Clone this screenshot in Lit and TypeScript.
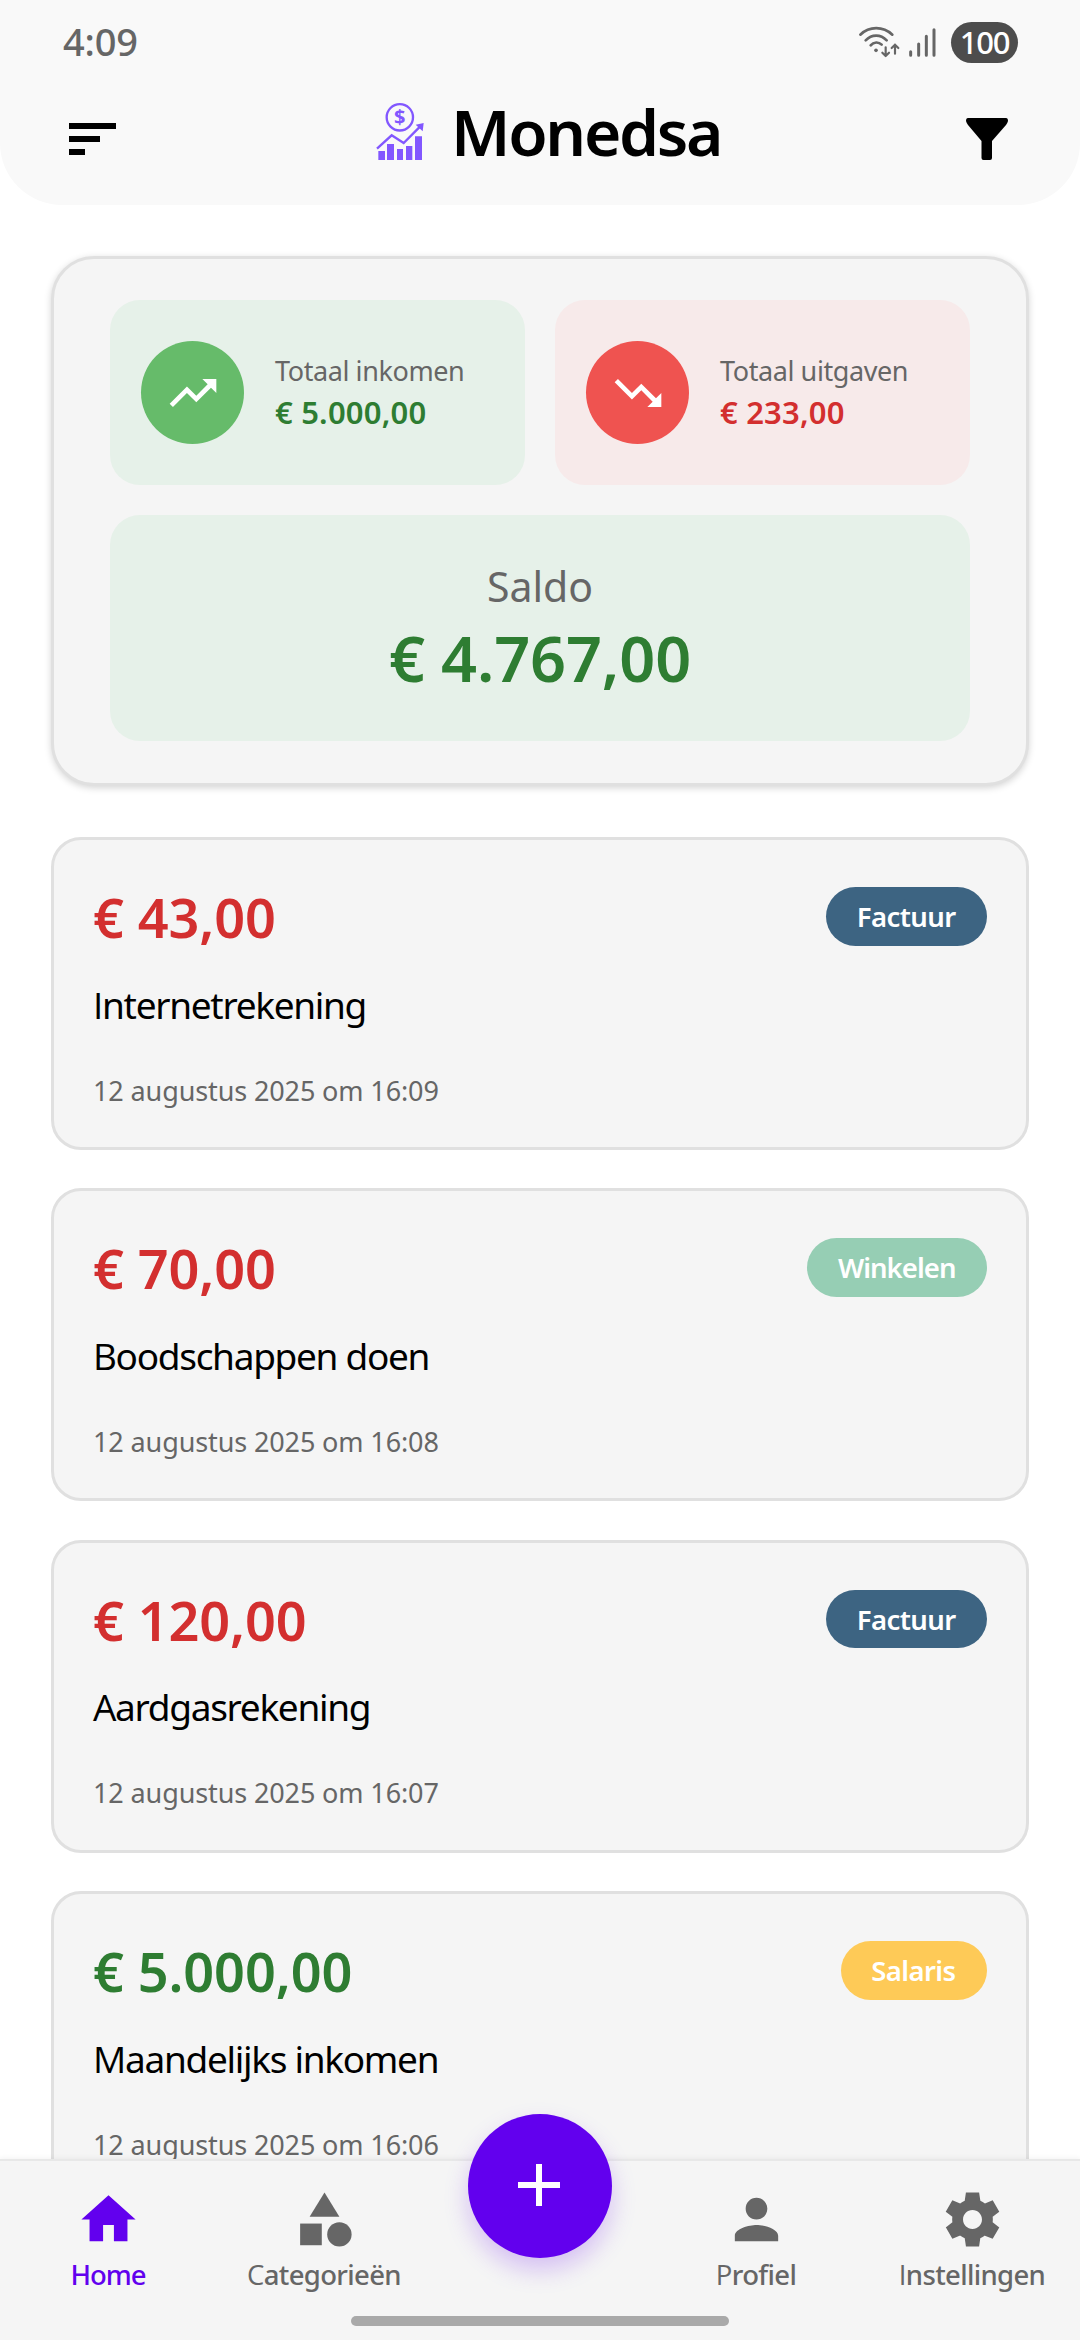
import { LitElement, html, css, svg } from "lit";
import { customElement, property } from "lit/decorators.js";
import { classMap } from "lit/directives/class-map.js";

interface Transaction {
  amount: string;
  income: boolean;
  title: string;
  date: string;
  category: string;
  tone: "bill" | "shop" | "salary";
}

const transactions: Transaction[] = [
  { amount: "€ 43,00", income: false, title: "Internetrekening", date: "12 augustus 2025 om 16:09", category: "Factuur", tone: "bill" },
  { amount: "€ 70,00", income: false, title: "Boodschappen doen", date: "12 augustus 2025 om 16:08", category: "Winkelen", tone: "shop" },
  { amount: "€ 120,00", income: false, title: "Aardgasrekening", date: "12 augustus 2025 om 16:07", category: "Factuur", tone: "bill" },
  { amount: "€ 5.000,00", income: true, title: "Maandelijks inkomen", date: "12 augustus 2025 om 16:06", category: "Salaris", tone: "salary" },
];

const icons = {
  up: svg`<path d="M16 6l2.29 2.29-4.88 4.88-4-4L2 16.59 3.41 18l6-6 4 4 6.3-6.29L22 12V6z"/>`,
  down: svg`<path d="M16 18l2.29-2.29-4.88-4.88-4 4L2 7.41 3.41 6l6 6 4-4 6.3 6.29L22 12v6z"/>`,
  home: svg`<path d="M10 20v-6h4v6h5v-8h3L12 3 2 12h3v8z"/>`,
  category: svg`<path d="M12 2l-5.5 9h11z"/><circle cx="17.5" cy="17.5" r="4.5"/><path d="M3 13.5h8v8H3z"/>`,
  person: svg`<path d="M12 12c2.21 0 4-1.79 4-4s-1.79-4-4-4-4 1.79-4 4 1.79 4 4 4zm0 2c-2.67 0-8 1.34-8 4v2h16v-2c0-2.66-5.33-4-8-4z"/>`,
  settings: svg`<path d="M19.44 12.99l-.01.02c.04-.33.08-.67.08-1.01 0-.34-.03-.66-.07-.99l.01.02 2.44-1.92-2.43-4.22-2.87 1.16.01.01c-.52-.4-1.09-.74-1.71-1h.01L14.44 2H9.57l-.44 3.07h.01c-.62.26-1.19.6-1.71 1l.01-.01-2.88-1.17-2.44 4.22 2.44 1.92.01-.02c-.04.33-.07.65-.07.99 0 .34.03.68.08 1.01l-.01-.02-2.1 1.65-.33.26 2.43 4.2 2.88-1.15-.02-.04c.53.41 1.1.75 1.73 1.01h-.03L9.58 22h4.85s.03-.18.06-.42l.38-2.65h-.01c.62-.26 1.2-.6 1.73-1.01l-.02.04 2.88 1.15 2.43-4.2s-.14-.12-.33-.26l-2.11-1.66zM12 15.5c-1.93 0-3.5-1.57-3.5-3.5s1.57-3.5 3.5-3.5 3.5 1.57 3.5 3.5-1.57 3.5-3.5 3.5z"/>`,
};

@customElement("transaction-card")
export class TransactionCard extends LitElement {
  @property({ attribute: false }) item!: Transaction;

  static styles = css`
    :host { display: block; box-sizing: border-box; height: 313px; flex: none; padding: 47px 39px 0; background: #f5f5f5; border: 3px solid #e0e0e0; border-radius: 30px; }
    .top { display: flex; justify-content: space-between; height: 59px; }
    .amount { font-size: 54px; line-height: 61px; font-weight: 600; letter-spacing: -0.1px; color: #d32f2f; }
    .income { color: #2e7d32; }
    .badge { box-sizing: border-box; height: 58.5px; padding: 0 31.5px 0 30.5px; border-radius: 30px; font-size: 27.5px; line-height: 59px; font-weight: 570; letter-spacing: -0.6px; color: #fff; }
    .shop { background: #96ceb4; letter-spacing: -0.95px; }
    .bill { background: #3d6482; }
    .salary { background: #feca57; }
    .title { margin-top: 33.5px; font-size: 37px; line-height: 50px; letter-spacing: -1.3px; color: #000; }
    .title::first-letter { font-family: "Open Sans", sans-serif; }
    .date { margin-top: 42px; font-size: 27px; line-height: 38px; letter-spacing: -0.12px; color: #666; }
  `;

  render() {
    const t = this.item;
    return html`
      <div class="top">
        <div class=${classMap({ amount: true, income: t.income })}>${t.amount}</div>
        <div class=${`badge ${t.tone}`}>${t.category}</div>
      </div>
      <div class="title">${t.title}</div>
      <div class="date">${t.date}</div>
    `;
  }
}

@customElement("app-root")
export class AppRoot extends LitElement {
  static styles = css`
    :host { display: flex; flex-direction: column; width: 1080px; height: 2340px; overflow: hidden; background: #fff; font-family: "Noto Sans", "Open Sans", sans-serif; white-space: nowrap; }
    svg { display: block; flex: none; }
    header { box-sizing: border-box; flex: none; height: 205px; background: #f9f9f9; border-radius: 0 0 62px 62px; }
    .status { display: flex; align-items: center; height: 80px; padding: 0 62px 0 63px; }
    .time { font-size: 38px; line-height: 80px; font-weight: 500; letter-spacing: -0.2px; color: #666; padding-top: 1px; }
    .signals { width: 90px; height: 70px; margin-left: auto; padding-top: 10px; }
    .battery { display: flex; align-items: center; justify-content: center; box-sizing: border-box; width: 67px; height: 41px; margin: 5px 0 0 11px; border-radius: 21px; background: #4d4d4d; color: #fff; font-size: 31px; line-height: 41px; font-weight: 500; letter-spacing: -1.2px; }
    .bar { display: flex; align-items: center; height: 118px; padding: 0 72px 0 69px; }
    .brand { display: flex; align-items: center; margin: 0 0 16px 244px; font-size: 64px; line-height: 102px; font-weight: 570; letter-spacing: -2.3px; color: #000; }
    .name { padding-top: 1px; }
    .logo { width: 80px; height: 80px; margin-right: 11px; }
    .logo text { font: 700 60px "Noto Sans", sans-serif; letter-spacing: 0; }
    .filter { margin-left: auto; }

    main { flex: 1; min-height: 0; overflow: hidden; padding: 51px 51px 0; display: flex; flex-direction: column; }
    .summary { box-sizing: border-box; flex: none; height: 530px; padding: 41px 56px; display: grid; grid-template-columns: 1fr 1fr; grid-template-rows: 185px 226px; gap: 30px; background: #f5f5f5; border: 3px solid #e0e0e0; border-radius: 43px; box-shadow: 0 2px 7px rgba(0, 0, 0, 0.17); }
    .tile { display: flex; align-items: center; gap: 31px; padding-left: 31px; border-radius: 30px; background: #e6f1e9; }
    .tile.out { background: #f7eaea; }
    .disc { display: flex; align-items: center; justify-content: center; width: 103px; height: 103px; border-radius: 50%; background: #66bb6a; }
    .out .disc { background: #ef5350; }
    .figures { padding-bottom: 2px; }
    .label { font-size: 27px; line-height: 41.5px; letter-spacing: -0.41px; color: #666; }
    .value { font-size: 31px; line-height: 42.5px; font-weight: 600; letter-spacing: 0.2px; color: #2e7d32; }
    .out .value { color: #d32f2f; }
    .balance { grid-column: 1 / -1; display: flex; flex-direction: column; align-items: center; justify-content: center; box-sizing: border-box; padding-bottom: 13px; border-radius: 30px; background: #e6f1e9; }
    .balance .label { font-size: 41px; line-height: 72px; letter-spacing: 0; }
    .balance .value { font-size: 63px; line-height: 72px; letter-spacing: -0.15px; }
    .list { display: flex; flex-direction: column; gap: 38.4px; margin-top: 51px; }

    nav { position: relative; box-sizing: border-box; flex: none; height: 181px; display: grid; grid-template-columns: repeat(5, 216px); background: #f5f5f5; border-top: 2px solid #e8e8e8; box-shadow: 0 -1px 5px rgba(0, 0, 0, 0.05); }
    .item { display: flex; flex-direction: column; align-items: center; padding-top: 26px; color: #666; }
    .item.active { color: #6200ee; }
    .caption { margin-top: 4px; font-size: 27.5px; line-height: 38px; font-weight: 500; letter-spacing: -0.65px; }
    .caption::first-letter { font-family: "Open Sans", sans-serif; }
    .active .caption { font-weight: 540; letter-spacing: -1.1px; }
    .active .caption::first-letter { font-family: "Noto Sans", sans-serif; }
    .fab { position: absolute; left: 468px; top: -47px; width: 144px; height: 144px; border-radius: 50%; background: #6200ee; box-shadow: 0 12px 24px rgba(98, 0, 238, 0.22); }
    .handle { position: absolute; left: 351px; bottom: 14px; width: 378px; height: 10px; border-radius: 5px; background: #a9a9a9; }
  `;

  private icon(shape: unknown, size: number) {
    return html`<svg width=${size} height=${size} viewBox="0 0 24 24" fill="currentColor">${shape}</svg>`;
  }

  private navItem(shape: unknown, caption: string, active = false) {
    return html`<div class=${classMap({ item: true, active })}>
      ${this.icon(shape, 65)}
      <div class="caption">${caption}</div>
    </div>`;
  }

  private tile(shape: unknown, label: string, value: string, out = false) {
    return html`<div class=${classMap({ tile: true, out })}>
      <div class="disc"><svg width="56" height="56" viewBox="0 0 24 24" fill="#fff">${shape}</svg></div>
      <div class="figures">
        <div class="label">${label}</div>
        <div class="value">${value}</div>
      </div>
    </div>`;
  }

  render() {
    return html`
      <header>
        <div class="status">
          <div class="time">4:09</div>
          <svg class="signals" viewBox="0 0 270 210" fill="none" stroke="#666" stroke-linecap="round" stroke-linejoin="round">
            <path stroke-width="8" d="M31 74C58 48 99 48 127 74M47 91C65 72 92 72 110 91M62 106C71 95 86 95 95 104"/>
            <circle cx="78" cy="121" r="5.5" fill="#666" stroke="none"/>
            <path stroke-width="6.5" d="M107 112V137M97 128L107 138L117 128M135 131V104M125 114L135 104L145 114"/>
            <path stroke-width="9" d="M182 125V136M206 102V136M229 79V136M252 59V136"/>
          </svg>
          <div class="battery">100</div>
        </div>
        <div class="bar">
          <svg width="47" height="32" viewBox="0 0 47 32"><path d="M0 0h47v6H0zM0 13h31v6H0zM0 26h16v6H0z"/></svg>
          <div class="brand">
            <svg class="logo" viewBox="0 0 240 240" fill="#8257ff">
              <circle cx="119.5" cy="79" r="39.5" fill="none" stroke="#8257ff" stroke-width="7"/>
              <text x="119.5" y="100" text-anchor="middle">$</text>
              <path d="M51 173L95 133L131 156L180 107" fill="none" stroke="#8257ff" stroke-width="7"/>
              <path d="M167 101L191 96L188 121Z"/>
              <path d="M55 180h20v27H55zM81 159h21v48H81zM111 174h18v33h-18zM138 165h19v42h-19zM165 136h21v71h-21z"/>
            </svg>
            <span class="name">Monedsa</span>
          </div>
          <svg class="filter" width="42" height="42" viewBox="0 0 42 42"><path d="M2 0H40Q42 0 42 3Q41.5 5 40 7L26 23V40Q26 42 24 42H17.5Q15.5 42 15.5 40V23L2 7Q.5 5 0 3Q0 0 2 0Z"/></svg>
        </div>
      </header>
      <main>
        <section class="summary">
          ${this.tile(icons.up, "Totaal inkomen", "€ 5.000,00")}
          ${this.tile(icons.down, "Totaal uitgaven", "€ 233,00", true)}
          <div class="balance">
            <div class="label">Saldo</div>
            <div class="value">€ 4.767,00</div>
          </div>
        </section>
        <section class="list">
          ${transactions.map((t) => html`<transaction-card .item=${t}></transaction-card>`)}
        </section>
      </main>
      <nav>
        ${this.navItem(icons.home, "Home", true)}
        ${this.navItem(icons.category, "Categorieën")}
        <div></div>
        ${this.navItem(icons.person, "Profiel")}
        ${this.navItem(icons.settings, "Instellingen")}
        <div class="fab">
          <svg width="144" height="144" viewBox="0 0 144 144" fill="#fff"><path d="M68 50h6v18h18v6H74v18h-6V74H50v-6h18z"/></svg>
        </div>
        <div class="handle"></div>
      </nav>
    `;
  }
}
